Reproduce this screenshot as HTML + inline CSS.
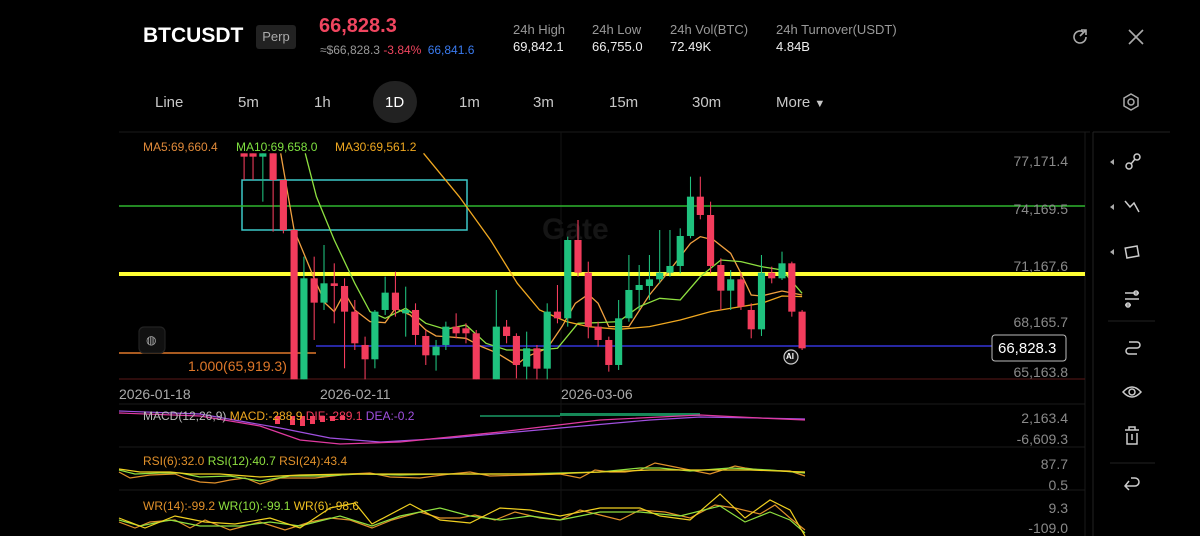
<!DOCTYPE html>
<html><head><meta charset="utf-8"><style>
*{margin:0;padding:0;box-sizing:border-box}
body{width:1200px;height:536px;background:#000;overflow:hidden;font-family:"Liberation Sans",sans-serif;position:relative;color:#ddd}
.a{position:absolute;white-space:nowrap}
.tf{position:absolute;top:94px;font-size:15px;color:#c8c8c8}
.ax{position:absolute;right:132px;font-size:14px;color:#8a8a8a;text-align:right}
</style></head><body>
<div class="a" style="left:143px;top:24px;font-size:21px;font-weight:bold;color:#fff">BTCUSDT</div>
<div class="a" style="left:256px;top:25px;width:40px;height:24px;background:#222;border-radius:3px;color:#aaa;font-size:13px;line-height:24px;text-align:center">Perp</div>
<div class="a" style="left:319px;top:15px;font-size:20px;color:#f0455f;font-weight:bold">66,828.3</div>
<div class="a" style="left:320px;top:43px;font-size:12px;color:#999">≈$66,828.3 <span style="color:#f0455f">-3.84%</span> <span style="color:#3a7bf0;margin-left:3px">66,841.6</span></div>
<div class="a" style="left:513px;top:21px;font-size:13px;color:#999;line-height:17px">24h High<br><span style="color:#eee">69,842.1</span></div>
<div class="a" style="left:592px;top:21px;font-size:13px;color:#999;line-height:17px">24h Low<br><span style="color:#eee">66,755.0</span></div>
<div class="a" style="left:670px;top:21px;font-size:13px;color:#999;line-height:17px">24h Vol(BTC)<br><span style="color:#eee">72.49K</span></div>
<div class="a" style="left:776px;top:21px;font-size:13px;color:#999;line-height:17px">24h Turnover(USDT)<br><span style="color:#eee">4.84B</span></div>
<svg class="a" style="left:1070px;top:27px" width="20" height="20" viewBox="0 0 20 20" fill="none" stroke="#aaa" stroke-width="1.6"><path d="M16 10a6 6 0 1 1-3-5.2"/><path d="M11 3h5v5M16 3l-6 6"/></svg>
<svg class="a" style="left:1127px;top:28px" width="18" height="18" viewBox="0 0 18 18" stroke="#aaa" stroke-width="1.6"><path d="M2 2l14 14M16 2L2 16"/></svg>
<div class="tf" style="left:155px">Line</div>
<div class="tf" style="left:238px">5m</div>
<div class="tf" style="left:314px">1h</div>
<div class="a" style="left:373px;top:81px;width:44px;height:42px;border-radius:21px;background:#222"></div>
<div class="tf" style="left:385px;color:#fff">1D</div>
<div class="tf" style="left:459px">1m</div>
<div class="tf" style="left:533px">3m</div>
<div class="tf" style="left:609px">15m</div>
<div class="tf" style="left:692px">30m</div>
<div class="tf" style="left:776px">More <span style="font-size:11px">▼</span></div>
<svg class="a" style="left:1121px;top:92px" width="20" height="20" viewBox="0 0 20 20" fill="none" stroke="#aaa" stroke-width="1.5"><path d="M10 2l7 4v8l-7 4-7-4V6z"/><circle cx="10" cy="10" r="3"/></svg>
<div class="a" style="left:542px;top:213px;font-size:30px;font-weight:bold;color:#151515">Gate</div>

<svg class="a" style="left:0;top:0" width="1200" height="536">
<g stroke="#1a1a1a" stroke-width="1">
<line x1="119" y1="132" x2="1090" y2="132"/><line x1="1085" y1="132" x2="1085" y2="536"/>
<line x1="1093" y1="132" x2="1093" y2="536" stroke="#222"/><line x1="1093" y1="132" x2="1170" y2="132" stroke="#222"/>
<line x1="119" y1="404" x2="1085" y2="404"/><line x1="119" y1="447" x2="1085" y2="447"/><line x1="119" y1="490" x2="1085" y2="490"/>
<line x1="561" y1="132" x2="561" y2="536" stroke="#131313"/>
<line x1="1108" y1="321" x2="1155" y2="321" stroke="#222"/><line x1="1110" y1="463" x2="1155" y2="463" stroke="#222"/>
</g>
<rect x="242" y="180" width="225" height="50" fill="none" stroke="#3cc8c8" stroke-width="1.5"/>
<line x1="119" y1="206" x2="1085" y2="206" stroke="#2fb52f" stroke-width="1.5"/>
<line x1="119" y1="274" x2="1085" y2="274" stroke="#ffff33" stroke-width="4"/>
<line x1="316" y1="346" x2="995" y2="346" stroke="#3434d8" stroke-width="1.5"/>
<line x1="119" y1="353" x2="316" y2="353" stroke="#e0782a" stroke-width="1.5"/>
<line x1="119" y1="379" x2="1085" y2="379" stroke="#5a1818" stroke-width="1"/>
</svg>
<svg class="a" style="left:0;top:0" width="1200" height="536">
<g transform="translate(120,130) scale(0.4464,0.3333)">
<g fill="none" stroke-width="1.3">
<polyline vector-effect="non-scaling-stroke" stroke="#f0a040" points="360,70 390,300 435,445 460,520 480,545 503,488 526,540 560,575 594,578 617,535 650,555 685,600 708,618 730,620 775,625 810,650 843,668 888,705 911,680 957,655 990,590 1020,520 1049,493 1071,520 1095,590 1140,590 1186,495 1232,420 1278,340 1300,320 1330,330 1368,370 1391,430 1414,495 1437,498 1483,483 1528,495"/>
<polyline vector-effect="non-scaling-stroke" stroke="#8ee040" points="415,70 440,200 480,330 526,460 560,545 594,565 640,535 685,580 730,598 775,585 820,640 866,660 934,660 980,655 1026,580 1071,578 1117,575 1163,530 1209,505 1255,510 1300,440 1346,390 1391,395 1437,410 1483,420 1528,490"/>
<polyline vector-effect="non-scaling-stroke" stroke="#f0a820" points="680,70 760,200 830,330 890,460 940,540 1000,575 1049,590 1117,598 1186,590 1255,570 1323,545 1391,530 1437,520 1483,498 1528,500"/>
</g>
</g>
</svg>
<svg class="a" style="left:0;top:0" width="1200" height="536" id="cs">
<g transform="translate(120,130) scale(0.4464,0.3333)" id="cg"></g>
</svg>
<script>
var d=[[278,70,80,70,150,'r'],[298,70,80,70,150,'r'],[320,70,80,70,215,'g'],[343,70,150,70,305,'r'],[366,150,300,150,310,'r'],[390,300,748,300,748,'r'],[412,445,748,380,748,'g'],[435,445,518,380,630,'r'],[457,460,518,345,540,'g'],[480,460,468,400,580,'r'],[503,468,545,445,715,'r'],[526,545,640,510,660,'r'],[549,645,688,620,748,'r'],[571,545,688,540,715,'g'],[594,488,540,440,555,'g'],[617,488,540,425,560,'r'],[640,540,550,470,620,'g'],[662,540,615,520,645,'r'],[685,618,676,600,705,'r'],[708,650,676,630,722,'g'],[730,590,645,575,660,'g'],[753,590,610,550,625,'r'],[775,595,610,580,640,'r'],[798,610,748,600,748,'r'],[843,590,748,480,748,'g'],[866,590,618,570,640,'r'],[888,618,705,610,745,'r'],[911,655,710,605,748,'g'],[934,655,716,645,748,'r'],[957,545,716,520,748,'g'],[980,545,565,465,580,'r'],[1003,330,565,320,590,'g'],[1026,330,428,270,440,'r'],[1049,428,590,395,625,'r'],[1071,590,630,575,650,'r'],[1095,630,705,620,725,'r'],[1117,565,705,510,720,'g'],[1140,480,565,375,575,'g'],[1163,465,480,405,540,'g'],[1186,448,468,375,510,'g'],[1209,428,448,300,460,'g'],[1232,408,428,300,440,'g'],[1255,318,408,295,430,'g'],[1278,200,318,140,325,'g'],[1300,200,255,140,268,'r'],[1323,255,408,215,430,'r'],[1346,405,482,385,540,'r'],[1368,448,482,420,540,'g'],[1391,448,530,430,540,'r'],[1414,540,598,520,625,'r'],[1437,428,598,375,618,'g'],[1460,428,445,410,460,'r'],[1483,400,445,365,450,'g'],[1505,400,545,395,560,'r'],[1528,545,655,540,660,'r']];
var s='';d.forEach(function(c){var col=c[5]=='r'?'#f23c5c':'#1fc27e';s+='<line x1="'+c[0]+'" x2="'+c[0]+'" y1="'+c[3]+'" y2="'+c[4]+'" stroke="'+col+'" stroke-width="2.4"/><rect x="'+(c[0]-8)+'" y="'+c[1]+'" width="16" height="'+Math.max(c[2]-c[1],8)+'" fill="'+col+'"/>';});
document.getElementById('cg').innerHTML=s;
</script>
<svg class="a" style="left:0;top:0" width="1200" height="536" fill="none" stroke-width="1.2">
<g fill="#f23c5c"><rect x="275" y="416" width="5" height="8"/><rect x="290" y="416" width="5" height="9"/><rect x="300" y="416" width="5" height="10"/><rect x="310" y="416" width="5" height="8"/><rect x="320" y="416" width="5" height="6"/><rect x="330" y="416" width="5" height="5"/><rect x="340" y="416" width="5" height="4"/></g>
<g fill="#1fc27e"><rect x="480" y="415" width="80" height="2" opacity=".6"/><rect x="560" y="413" width="140" height="3" opacity=".7"/></g>
<polyline stroke="#a050e0" points="119,411 200,414 280,428 330,438 380,442 450,438 560,428 650,420 700,417 760,418 805,419"/>
<polyline stroke="#e03aa0" points="119,413 200,416 260,426 300,440 340,444 400,442 500,432 600,420 700,415 760,418 805,420"/>
<polyline stroke="#e0902a" points="119,472 130,478 150,475 175,474 185,478 200,482 215,483 230,480 245,478 260,484 280,478 315,478 350,474 370,473 390,477 420,478 450,474 470,472 490,476 530,475 560,474 580,478 595,470 610,472 625,472 640,470 655,463 670,466 690,470 710,474 735,466 745,468 760,470 790,471 805,476"/>
<polyline stroke="#8ee040" points="119,470 135,474 160,473 180,473 200,477 230,476 260,481 290,476 320,476 360,474 400,475 440,474 480,474 520,474 560,473 600,472 640,468 660,468 690,471 730,468 770,470 805,473"/>
<polyline stroke="#f0d020" points="119,469 140,472 170,472 190,474 220,474 260,477 300,475 350,474 400,474 450,474 500,474 550,474 600,472 650,470 700,470 750,470 805,472"/>
<polyline stroke="#e0902a" points="119,522 135,528 150,522 175,520 190,528 205,520 230,530 260,522 285,530 310,522 330,518 350,520 372,528 392,520 420,512 440,518 460,518 475,515 495,520 515,512 540,518 560,520 580,510 600,515 620,520 640,510 665,512 690,518 715,505 735,508 760,514 775,505 790,518 805,530"/>
<polyline stroke="#8ee040" points="119,520 140,526 170,520 200,526 240,526 270,522 300,526 340,516 372,526 400,516 440,508 470,516 500,520 530,516 560,520 600,512 640,512 680,516 720,506 745,522 770,512 790,520 805,533"/>
<polyline stroke="#f0d020" points="119,518 145,528 175,516 205,522 235,524 270,518 300,528 330,508 355,503 372,524 410,504 440,520 470,523 500,508 530,510 560,516 600,508 640,508 660,516 690,520 720,494 745,518 770,500 790,510 805,536"/>
<g stroke="#ccc" stroke-width="1.5">
<circle cx="1129" cy="166" r="3"/><circle cx="1137" cy="157" r="3"/><path d="M1131 164l4-5"/>
<path d="M1125 201l5 6 4-4 5 9"/>
<rect x="1126" y="247" width="12" height="10" transform="rotate(-10 1132 252)"/>
<path d="M1125 293h14M1125 299h14M1125 305h6" /><circle cx="1136" cy="293" r="2"/><circle cx="1128" cy="305" r="2"/>
<path d="M1129 342h8a3 3 0 0 1 0 6h-8a3 3 0 0 0 0 6h8"/>
<path d="M1123 392q9-10 18 0q-9 10-18 0z"/><circle cx="1132" cy="392" r="3"/>
<path d="M1125 430h14M1129 430v-3h6v3M1127 433v11h10v-11M1132 434v6"/>
<path d="M1129 481l-4 5 4 4M1125 486h10a4 4 0 0 0 0-8h-4"/>
</g>
<g fill="#aaa"><path d="M1110 162l4-3v6z"/><path d="M1110 207l4-3v6z"/><path d="M1110 252l4-3v6z"/></g>
<rect x="992" y="335" width="74" height="26" rx="3" fill="#000" stroke="#bbb" stroke-width="1"/>
<circle cx="791" cy="357" r="7" fill="#111" stroke="#ccc"/>
<rect x="139" y="327" width="26" height="26" rx="5" fill="#111" stroke="#222"/>
</svg>
<div class="a" style="left:143px;top:140px;font-size:12px;color:#e08a3a">MA5:69,660.4</div>
<div class="a" style="left:236px;top:140px;font-size:12px;color:#7ee040">MA10:69,658.0</div>
<div class="a" style="left:335px;top:140px;font-size:12px;color:#f0a820">MA30:69,561.2</div>
<div class="a" style="left:146px;top:333px;font-size:12px;color:#aaa">◍</div>
<div class="a" style="left:188px;top:358px;font-size:14px;color:#e0782a">1.000(65,919.3)</div>
<div class="a" style="left:786px;top:352px;font-size:8px;color:#fff;font-weight:bold">AI</div>
<div class="ax" style="top:153px">77,171.4</div>
<div class="ax" style="top:201px">74,169.5</div>
<div class="ax" style="top:258px">71,167.6</div>
<div class="ax" style="top:314px">68,165.7</div>
<div class="ax" style="top:364px">65,163.8</div>
<div class="a" style="left:998px;top:340px;font-size:15px;color:#fff">66,828.3</div>
<div class="ax" style="top:410px">2,163.4</div>
<div class="ax" style="top:431px">-6,609.3</div>
<div class="ax" style="top:456px">87.7</div>
<div class="ax" style="top:477px">0.5</div>
<div class="ax" style="top:500px">9.3</div>
<div class="ax" style="top:520px">-109.0</div>
<div class="a" style="left:119px;top:386px;font-size:14px;color:#aaa">2026-01-18</div>
<div class="a" style="left:320px;top:386px;font-size:14px;color:#aaa">2026-02-11</div>
<div class="a" style="left:561px;top:386px;font-size:14px;color:#aaa">2026-03-06</div>
<div class="a" style="left:143px;top:409px;font-size:12px;color:#bbb">MACD(12,26,9) <span style="color:#f0a820">MACD:-288.9</span> <span style="color:#f23c5c">DIF:-289.1</span> <span style="color:#a050e0">DEA:-0.2</span></div>
<div class="a" style="left:143px;top:454px;font-size:12px;color:#e0902a">RSI(6):32.0 <span style="color:#8ee040">RSI(12):40.7</span> RSI(24):43.4</div>
<div class="a" style="left:143px;top:499px;font-size:12px;color:#e0902a">WR(14):-99.2 <span style="color:#8ee040">WR(10):-99.1</span> <span style="color:#f0c020">WR(6):-98.6</span></div>
</body></html>
